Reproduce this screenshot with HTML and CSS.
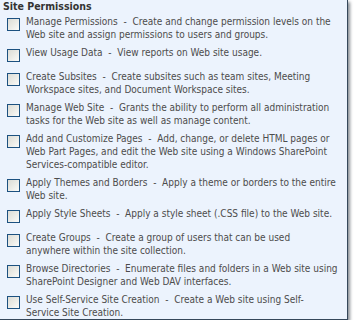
FILE: index.html
```html
<!DOCTYPE html>
<html>
<head>
<meta charset="utf-8">
<link rel="stylesheet" href="styles.css">
</head>
<body>
<div class="panel">
  <div class="title">Site Permissions</div>
  <ul class="perms">
    <li class="perm"><span class="box"></span><span class="txt">Manage Permissions&nbsp; -&nbsp; Create and change permission levels on the Web site and assign permissions to users and groups.</span></li>
    <li class="perm"><span class="box"></span><span class="txt">View Usage Data&nbsp; -&nbsp; View reports on Web site usage.</span></li>
    <li class="perm"><span class="box"></span><span class="txt">Create Subsites&nbsp; -&nbsp; Create subsites such as team sites, Meeting Workspace sites, and Document Workspace sites.</span></li>
    <li class="perm"><span class="box"></span><span class="txt">Manage Web Site&nbsp; -&nbsp; Grants the ability to perform all administration tasks for the Web site as well as manage content.</span></li>
    <li class="perm"><span class="box"></span><span class="txt">Add and Customize Pages&nbsp; -&nbsp; Add, change, or delete HTML pages or Web Part Pages, and edit the Web site using a Windows SharePoint Services-compatible editor.</span></li>
    <li class="perm"><span class="box"></span><span class="txt">Apply Themes and Borders&nbsp; -&nbsp; Apply a theme or borders to the entire Web site.</span></li>
    <li class="perm"><span class="box"></span><span class="txt">Apply Style Sheets&nbsp; -&nbsp; Apply a style sheet (.CSS file) to the Web site.</span></li>
    <li class="perm"><span class="box"></span><span class="txt">Create Groups&nbsp; -&nbsp; Create a group of users that can be used<br>anywhere within the site collection.</span></li>
    <li class="perm"><span class="box"></span><span class="txt">Browse Directories&nbsp; -&nbsp; Enumerate files and folders in a Web site using SharePoint Designer and Web DAV interfaces.</span></li>
    <li class="perm"><span class="box"></span><span class="txt">Use Self-Service Site Creation&nbsp; -&nbsp; Create a Web site using Self-<br>Service Site Creation.</span></li>
  </ul>
</div>
</body>
</html>
```
FILE: styles.css
```css
html, body {
  margin: 0;
  padding: 0;
  background: #ffffff;
}
.panel {
  width: 348px;
  height: 320px;
  box-sizing: border-box;
  background: #ecf3fd;
  border-right: 1px solid #35475a;
  border-bottom: 1px solid #35475a;
  box-shadow: 2px 2px 3px rgba(40, 50, 60, 0.55);
  font-family: "DejaVu Sans Condensed", "DejaVu Sans", sans-serif;
  font-stretch: condensed;
  font-size: 10px;
  line-height: 13px;
  color: #4c4c4c;
  overflow: hidden;
}
.title {
  font-weight: bold;
  font-size: 10.5px;
  color: #333333;
  padding-left: 3px;
  margin-bottom: 2px;
}
.perms {
  list-style: none;
  margin: 0;
  padding: 0;
}
.perm {
  display: flex;
  align-items: flex-start;
  padding-bottom: 5px;
}
.box {
  flex: none;
  width: 11px;
  height: 11px;
  margin: 3px 6px 3px 7px;
  border: 1px solid #1c5180;
  background: linear-gradient(135deg, #dcdcd5 0%, #ebebe6 50%, #fbfbf9 100%);
}
.txt {
  width: 317px;
}
```
